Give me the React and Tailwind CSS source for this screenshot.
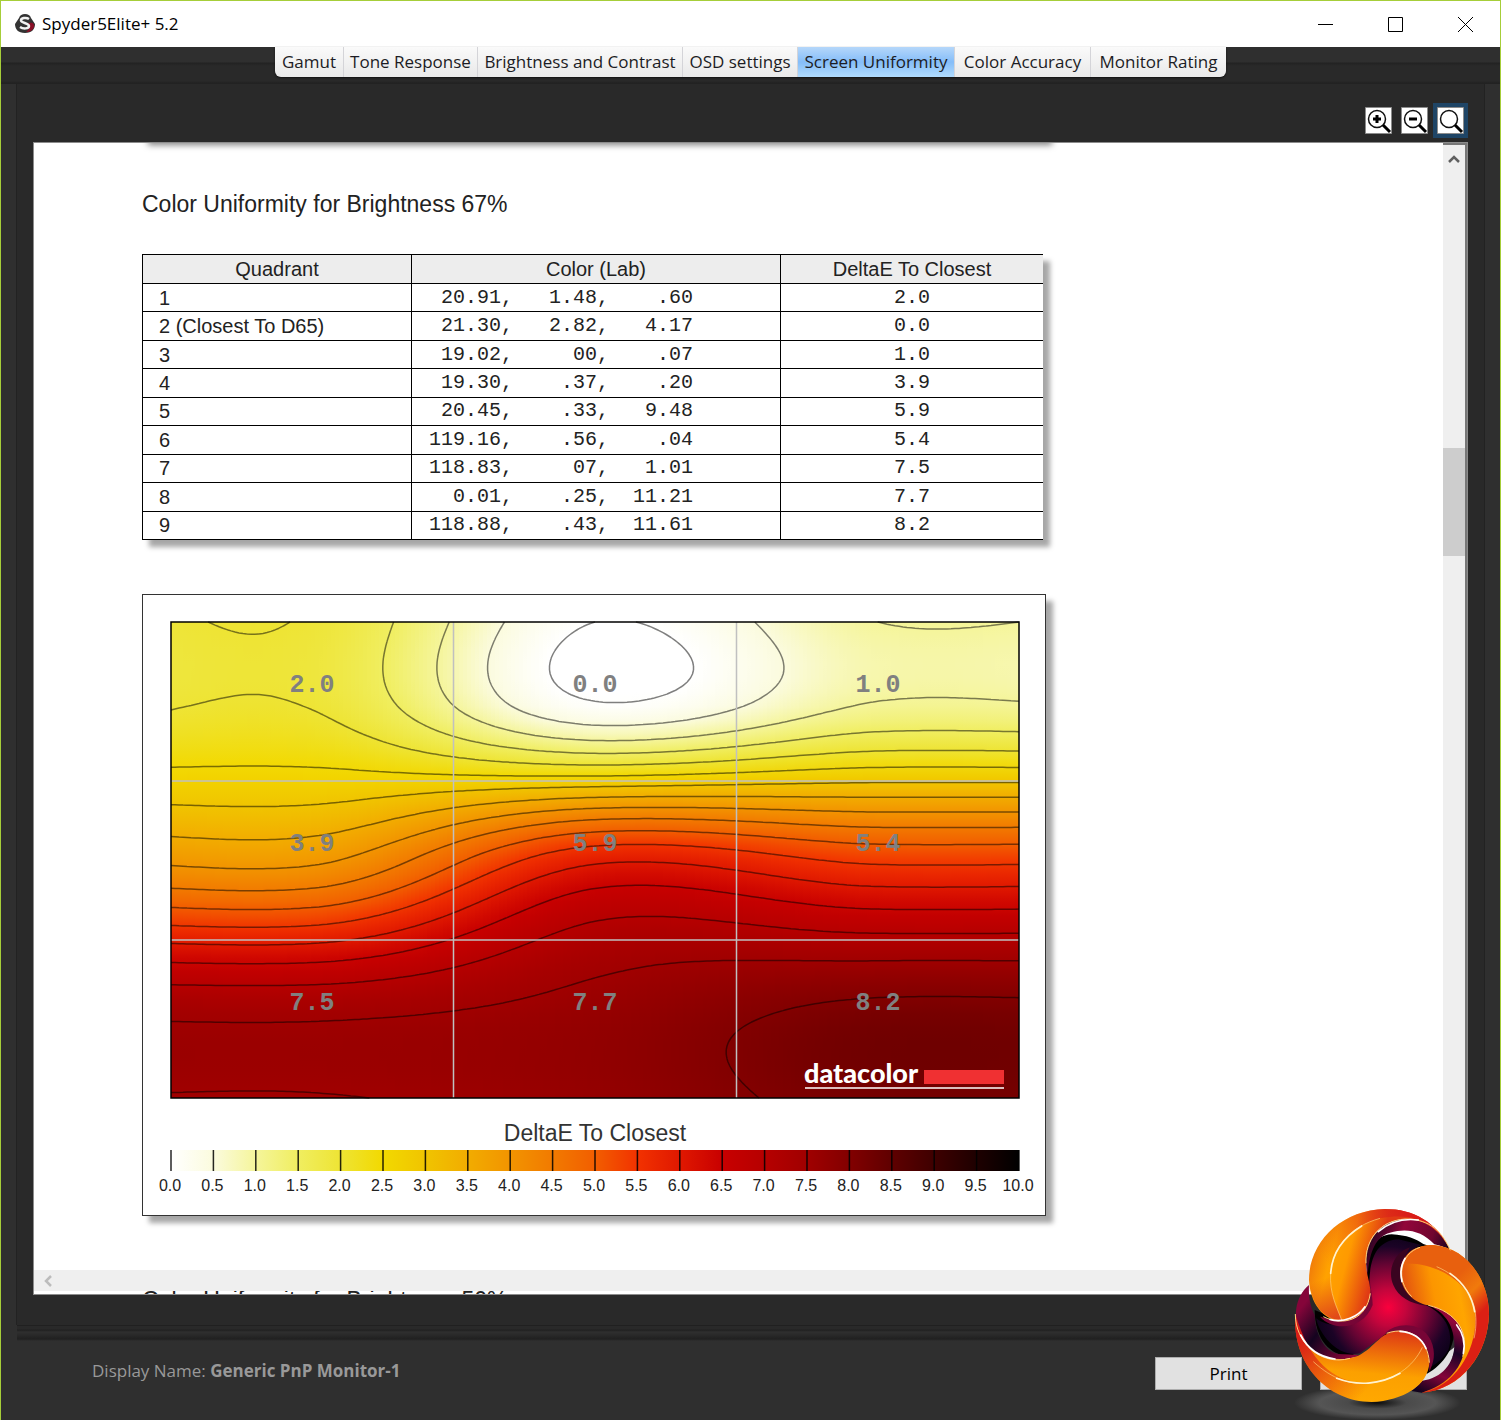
import clsx from "clsx";

const TABS = [
  { label: "Gamut", width: "w-[69px]" },
  { label: "Tone Response", width: "w-[134px]" },
  { label: "Brightness and Contrast", width: "w-[205px]" },
  { label: "OSD settings", width: "w-[115px]" },
  { label: "Screen Uniformity", width: "w-[157px]" },
  { label: "Color Accuracy", width: "w-[136px]" },
  { label: "Monitor Rating", width: "w-[135px]" },
];

const ROWS = [
  { name: "1", lab: ["20.91", "1.48", ".60"], delta: "2.0" },
  { name: "2 (Closest To D65)", lab: ["21.30", "2.82", "4.17"], delta: "0.0" },
  { name: "3", lab: ["19.02", "00", ".07"], delta: "1.0" },
  { name: "4", lab: ["19.30", ".37", ".20"], delta: "3.9" },
  { name: "5", lab: ["20.45", ".33", "9.48"], delta: "5.9" },
  { name: "6", lab: ["119.16", ".56", ".04"], delta: "5.4" },
  { name: "7", lab: ["118.83", "07", "1.01"], delta: "7.5" },
  { name: "8", lab: ["0.01", ".25", "11.21"], delta: "7.7" },
  { name: "9", lab: ["118.88", ".43", "11.61"], delta: "8.2" },
];

// one colour for every 0.5 of deltaE
const SCALE = [
  [255, 255, 255],
  [251, 251, 222],
  [245, 245, 155],
  [240, 238, 96],
  [238, 228, 52],
  [242, 217, 0],
  [240, 196, 0],
  [242, 172, 0],
  [242, 148, 0],
  [242, 122, 0],
  [242, 94, 0],
  [242, 50, 0],
  [224, 24, 0],
  [200, 0, 0],
  [182, 0, 0],
  [160, 0, 0],
  [130, 0, 0],
  [95, 0, 0],
  [62, 0, 0],
  [30, 0, 0],
  [0, 0, 0],
];

const colorFor = (value) => {
  const v = Math.min(Math.max(value, 0), 10) * 2;
  const i = Math.min(Math.floor(v), 19);
  const mix = SCALE[i].map((c, k) =>
    Math.round(c + (SCALE[i + 1][k] - c) * (v - i))
  );
  return `rgb(${mix.join(",")})`;
};

// cubic hermite curve through the three cell centres at t = -1, 0, 1,
// the outer half cells bend back to the edge value
const curve = (a, b, c, t) => {
  const u = Math.min(Math.abs(t), 1.5);
  const end = t < 0 ? a : c;
  const delta = end - b;
  const slope = ((c - a) / 2) * (t < 0 ? -1 : 1);
  if (u > 1) {
    const s = (u - 1) / 0.5;
    return end + (delta / 6) * (s - 1.5 * s * s + 0.5 * s ** 3);
  }
  return (
    b +
    slope * (u ** 3 - 2 * u * u + u) +
    delta * (3 * u * u - 2 * u ** 3) +
    (delta / 3) * (u ** 3 - u * u)
  );
};

const PLOT_W = 848;
const PLOT_H = 476;
const STEP = 4;
const DELTAS = [
  [1.96, 0.0, 1.0],
  [3.9, 5.9, 5.4],
  [7.48, 7.69, 8.17],
];

const field = (x, y) => {
  const tx = (x / PLOT_W) * 3 - 1.5;
  const ty = (y / PLOT_H) * 3 - 1.5;
  const [a, b, c] = DELTAS.map((row) => curve(...row, tx));
  return curve(a, b, c, ty);
};

const contourPath = (level) => {
  let d = "";
  for (let y = 0; y < PLOT_H; y += STEP) {
    for (let x = 0; x < PLOT_W; x += STEP) {
      const corners = [
        [x, y],
        [x + STEP, y],
        [x + STEP, y + STEP],
        [x, y + STEP],
      ];
      const values = corners.map(([cx, cy]) => field(cx, cy) - level);
      const hits = [];
      for (let i = 0; i < 4; i++) {
        const j = (i + 1) % 4;
        if (values[i] < 0 !== values[j] < 0) {
          const k = values[i] / (values[i] - values[j]);
          const px = corners[i][0] + (corners[j][0] - corners[i][0]) * k;
          const py = corners[i][1] + (corners[j][1] - corners[i][1]) * k;
          hits.push(`${px.toFixed(1)} ${py.toFixed(1)}`);
        }
      }
      if (hits.length === 2) d += `M${hits[0]}L${hits[1]}`;
    }
  }
  return d;
};

const CONTOURS = Array.from({ length: 17 }, (_, i) => contourPath(i / 2));
const COLUMNS = Array.from({ length: PLOT_W / STEP }, (_, i) => i * STEP);
const STOPS = Array.from({ length: 35 }, (_, i) => i / 34);

const AppIcon = () => (
  <svg className="size-5" viewBox="0 0 20 20" aria-hidden="true">
    <path d="M10 0c3 0 5 1 6 4l4 6c0 5-3 9-10 9S0 15 0 10l4-6c1-3 3-4 6-4z" fill="#333" />
    <path d="M12 10c5-3 8 0 7 3-1 3-4 5-8 5 3-2 4-5 1-8z" fill="#8a1027" />
    <path d="M14 5c-3-2-8-1-8 1.500S14 9 14 12s-6 3-9 1" fill="none" stroke="#f2f2f2" strokeWidth="2.500" />
  </svg>
);

const TitleBar = () => (
  <header className="flex h-[46px] items-center justify-between bg-white pl-3.5">
    <div className="flex items-center gap-[7px]">
      <AppIcon />
      <h1 className="text-[17px] text-black">Spyder5Elite+ 5.2</h1>
    </div>
    <div className="flex h-full">
      <button type="button" aria-label="Minimize" className="grid w-[70px] place-items-center">
        <svg width="15" height="15" viewBox="0 0 15 15" stroke="#000">
          <path d="M0 7.500H15" />
        </svg>
      </button>
      <button type="button" aria-label="Maximize" className="grid w-[70px] place-items-center">
        <svg width="15" height="15" viewBox="0 0 15 15" stroke="#000" fill="none">
          <path d="M.5.5h14v14H.5z" />
        </svg>
      </button>
      <button type="button" aria-label="Close" className="grid w-[70px] place-items-center">
        <svg width="15" height="15" viewBox="0 0 15 15" stroke="#000">
          <path d="M0 0l15 15M15 0L0 15" />
        </svg>
      </button>
    </div>
  </header>
);

const Tabs = () => (
  <nav className="flex h-[37px] items-start justify-center bg-[linear-gradient(#2f2f2f_15px,#222_16px,#292929_19px,#292929_34px,#222_36px)]">
    <div className="flex h-[30px] overflow-hidden rounded-b-md shadow-[0_1px_2px_#111]">
      {TABS.map(({ label, width }) => (
        <button
          key={label}
          type="button"
          className={clsx(
            "border-r border-[#d4d4d8] text-[17px] leading-[30px] whitespace-nowrap text-[#1c1c24] last:border-r-0",
            width,
            label === "Screen Uniformity"
              ? "bg-linear-to-b from-[#b5d7fa] via-[#85bdf8] to-[#b0dbfd]"
              : "bg-linear-to-b from-[#fafafa] to-[#e9e9e9]"
          )}
        >
          {label}
        </button>
      ))}
    </div>
  </nav>
);

const ZoomButton = ({ label, sign, active }) => (
  <button
    type="button"
    aria-label={label}
    className={clsx("border-4 p-0", active ? "border-[#1f4566]" : "border-transparent")}
  >
    <svg className="block" width="27" height="27" viewBox="0 0 27 27" fill="none">
      <path d="M.5.5h26v26H.5z" fill="#fff" stroke="#8c8c8c" />
      <circle cx="12" cy="12" r="8.500" stroke="#111" strokeWidth="1.500" />
      <path d="M18 18l7 7" stroke="#000" strokeWidth="3" />
      {sign && <path d={sign} stroke="#000" strokeWidth="3" />}
    </svg>
  </button>
);

const UniformityTable = () => (
  <table className="mt-[34px] h-[286px] w-[901px] border-collapse border-y border-l border-black text-[20px] leading-6 text-[#222] shadow-[7px_7px_5px_rgba(0,0,0,0.35)]">
    <thead>
      <tr className="h-[29px] bg-[#ededed]">
        <th className="w-[269px] border border-black p-0 font-normal">Quadrant</th>
        <th className="w-[369px] border border-black p-0 font-normal">Color (Lab)</th>
        <th className="border-b border-black p-0 font-normal">DeltaE To Closest</th>
      </tr>
    </thead>
    <tbody>
      {ROWS.map(({ name, lab, delta }) => (
        <tr key={name}>
          <td className="border border-black py-0 pl-4">{name}</td>
          <td className="border border-black py-0 pl-[17px] font-['Liberation_Mono',monospace] whitespace-pre">
            {`${lab[0]},`.padStart(7) + `${lab[1]},`.padStart(8) + lab[2].padStart(7)}
          </td>
          <td className="border-b border-black p-0 text-center font-['Liberation_Mono',monospace]">
            {delta}
          </td>
        </tr>
      ))}
    </tbody>
  </table>
);

const HeatMap = () => (
  <g transform="translate(28 27)">
    <defs>
      {COLUMNS.map((x) => (
        <linearGradient key={x} id={`col${x}`} x1="0" y1="0" x2="0" y2="1">
          {STOPS.map((s) => (
            <stop key={s} offset={s} stopColor={colorFor(field(x + STEP / 2, s * PLOT_H))} />
          ))}
        </linearGradient>
      ))}
    </defs>
    {COLUMNS.map((x) => (
      <rect key={x} x={x} width={STEP} height={PLOT_H} fill={`url(#col${x})`} shapeRendering="crispEdges" />
    ))}
    {CONTOURS.map((d, i) => (
      <path key={i} d={d} fill="none" stroke="#000" strokeOpacity="0.5" strokeWidth="1.500" />
    ))}
    <path
      d="M282.500 0V476M565.500 0V476M0 159H848M0 318H848"
      stroke="#c0c0c0"
      strokeWidth="1.500"
    />
    <rect width={PLOT_W} height={PLOT_H} fill="none" stroke="#000" strokeWidth="1.500" />
    {DELTAS.map((row, r) =>
      row.map((value, c) => (
        <text
          key={`${r}${c}`}
          x={141 + c * 283}
          y={70 + r * 159}
          textAnchor="middle"
          className="fill-[#808080] font-['Liberation_Mono',monospace] text-[25px] font-bold"
        >
          {value.toFixed(1)}
        </text>
      ))
    )}
    <text x="633" y="461" className="fill-white font-['Lato',sans-serif] text-[27px] font-black">
      datacolor
    </text>
    <path d="M753 448h80v14h-80z" fill="#f03032" />
    <path d="M634 466h199" stroke="#fff" strokeWidth="1.500" />
  </g>
);

const Legend = () => (
  <g transform="translate(28 555)">
    <defs>
      <linearGradient id="scale">
        {SCALE.map((_, i) => (
          <stop key={i} offset={i / 20} stopColor={colorFor(i / 2)} />
        ))}
      </linearGradient>
    </defs>
    <text x="424" y="-9" textAnchor="middle" className="fill-[#333] text-[23px]">
      DeltaE To Closest
    </text>
    <rect width={PLOT_W} height="21" fill="url(#scale)" />
    {SCALE.map((_, i) => (
      <g key={i}>
        <path d={`M${(i * PLOT_W) / 20} 0v21`} stroke="#000" strokeOpacity="0.850" strokeWidth="1.500" />
        <text x={(i * PLOT_W) / 20 - 1} y="41" textAnchor="middle" className="fill-[#222] text-[16px]">
          {(i / 2).toFixed(1)}
        </text>
      </g>
    ))}
  </g>
);

const Chevron = ({ d, color }) => (
  <svg width="12" height="12" viewBox="0 0 12 12" fill="none" stroke={color} strokeWidth="2.500">
    <path d={d} />
  </svg>
);

const Report = () => (
  <main className="border border-[#8c8c8c] bg-white">
    <div className="flex">
      <div className="relative min-w-0 flex-1 overflow-hidden pt-[45px] pr-8 pb-[54px] pl-[108px] font-['Liberation_Sans',sans-serif]">
        <div className="absolute -top-2 left-[114px] h-2 w-[904px] shadow-[0_2px_6px_rgba(0,0,0,0.5)]" />
        <h2 className="text-[23px] leading-8 text-[#222]">Color Uniformity for Brightness 67%</h2>
        <UniformityTable />
        <figure className="mt-[54px] w-[904px] border border-[#333] bg-white shadow-[7px_7px_5px_rgba(0,0,0,0.35)]">
          <svg className="block w-full" viewBox="0 0 902 620" role="img" aria-label="DeltaE To Closest">
            <HeatMap />
            <Legend />
          </svg>
        </figure>
      </div>
      <div className="flex w-6 flex-col items-center border-t-2 border-r-2 border-[#777] bg-[#efefef] pt-2">
        <Chevron d="M1 9l5-5 5 5" color="#606060" />
        <div className="mt-[283px] h-[108px] w-full bg-[#cdcdcd]" />
      </div>
    </div>
    <div className="flex h-[21px] items-center bg-[#efefef] pl-2">
      <Chevron d="M9 1L4 6l5 5" color="#bcbcbc" />
    </div>
    <div className="h-[3px] overflow-hidden pl-[108px] font-['Liberation_Sans',sans-serif] text-[23px] leading-[18px] text-[#222]">
      Color Uniformity for Brightness 50%
    </div>
  </main>
);

const Footer = () => (
  <footer className="flex items-center justify-between pt-[10px] pr-[33px] pb-[30px] pl-[91px]">
    <p className="pb-1.5 text-[17px] text-[#999]">
      Display Name: <b>Generic PnP Monitor-1</b>
    </p>
    <div className="flex gap-[18px]">
      <button type="button" className="h-[33px] w-[147px] border border-[#adadad] bg-[#e1e1e1] text-[17px] text-black">
        Print
      </button>
      <button type="button" aria-label="Next" className="h-[33px] w-[147px] border border-[#adadad] bg-[#e1e1e1]" />
    </div>
  </footer>
);

const ARMS = {
  top: "M541 181C500 95 430 57 345 57C215 60 117 155 117 270C120 340 160 390 212 393C265 392 302 355 301 300C298 265 286 250 288 205C292 135 340 90 405 87C465 87 510 120 541 181Z",
  right: "M390 245C394 195 435 165 490 165C590 172 657 270 657 372C655 490 575 600 455 608C540 585 590 520 583 450C577 395 530 358 475 346C425 335 392 300 390 245Z",
  bottom: "M76 372C66 520 170 635 305 636C400 632 475 585 478 518C474 460 440 424 388 422C330 424 318 470 265 497C200 522 130 500 98 447C85 425 78 405 76 372Z",
};

const Logo = () => (
  <svg
    className="pointer-events-none absolute -right-px bottom-0"
    width="231"
    height="230"
    viewBox="0 0 693 690"
    fill="none"
    aria-hidden="true"
  >
    <defs>
      <radialGradient id="core" gradientUnits="userSpaceOnUse" cx="355" cy="352" r="215">
        <stop offset="0" stopColor="#fa003d" />
        <stop offset="0.250" stopColor="#c3053c" />
        <stop offset="0.600" stopColor="#650433" />
        <stop offset="0.850" stopColor="#1b0326" />
        <stop offset="1" stopColor="#10021c" />
      </radialGradient>
      <linearGradient id="ring" gradientUnits="userSpaceOnUse" x1="300" y1="90" x2="540" y2="180">
        <stop offset="0" stopColor="#14031f" />
        <stop offset="0.400" stopColor="#92063a" />
        <stop offset="0.750" stopColor="#70052f" />
        <stop offset="1" stopColor="#12021c" />
      </linearGradient>
      <linearGradient id="ringLeft" gradientUnits="userSpaceOnUse" x1="80" y1="370" x2="250" y2="500">
        <stop offset="0" stopColor="#85053a" />
        <stop offset="0.400" stopColor="#14031f" />
        <stop offset="1" stopColor="#92063a" />
      </linearGradient>
      <linearGradient id="ringRight" gradientUnits="userSpaceOnUse" x1="560" y1="400" x2="460" y2="610">
        <stop offset="0" stopColor="#92063a" />
        <stop offset="0.350" stopColor="#1b0326" />
        <stop offset="0.700" stopColor="#85053a" />
        <stop offset="1" stopColor="#12021c" />
      </linearGradient>
      <linearGradient id="armTop" gradientUnits="userSpaceOnUse" x1="117" y1="220" x2="305" y2="270">
        <stop offset="0" stopColor="#f07a0a" />
        <stop offset="0.300" stopColor="#ffa200" />
        <stop offset="0.550" stopColor="#ff9a00" />
        <stop offset="1" stopColor="#e03a14" />
      </linearGradient>
      <linearGradient id="armRight" gradientUnits="userSpaceOnUse" x1="400" y1="340" x2="610" y2="300">
        <stop offset="0" stopColor="#e04a12" />
        <stop offset="0.450" stopColor="#fc9600" />
        <stop offset="0.800" stopColor="#ffa500" />
        <stop offset="1" stopColor="#f48a08" />
      </linearGradient>
      <linearGradient id="armBottom" gradientUnits="userSpaceOnUse" x1="330" y1="425" x2="310" y2="636">
        <stop offset="0" stopColor="#df3c14" />
        <stop offset="0.600" stopColor="#fca000" />
        <stop offset="1" stopColor="#ffa800" />
      </linearGradient>
      <linearGradient id="shadeTop" gradientUnits="userSpaceOnUse" x1="420" y1="70" x2="160" y2="200">
        <stop offset="0" stopColor="#d91c18" />
        <stop offset="1" stopColor="#e8501a" stopOpacity="0" />
      </linearGradient>
      <linearGradient id="foldTop" gradientUnits="userSpaceOnUse" x1="150" y1="270" x2="190" y2="390">
        <stop offset="0" stopColor="#e0481a" stopOpacity="0" />
        <stop offset="1" stopColor="#e0481a" />
      </linearGradient>
      <linearGradient id="shadeRight" gradientUnits="userSpaceOnUse" x1="560" y1="260" x2="650" y2="350">
        <stop offset="0" stopColor="#e8600e" />
        <stop offset="0.500" stopColor="#f07a0c" />
        <stop offset="1" stopColor="#dc2014" />
      </linearGradient>
      <linearGradient id="shadeLeft" gradientUnits="userSpaceOnUse" x1="80" y1="430" x2="290" y2="600">
        <stop offset="0" stopColor="#d91c18" />
        <stop offset="1" stopColor="#d91c18" stopOpacity="0" />
      </linearGradient>
      <radialGradient id="floor">
        <stop offset="0" stopColor="#0c0c0c" />
        <stop offset="0.350" stopColor="#4a4a4a" />
        <stop offset="0.700" stopColor="#555" />
        <stop offset="1" stopColor="#555" stopOpacity="0" />
      </radialGradient>
    </defs>
    <ellipse cx="322" cy="638" rx="250" ry="52" fill="url(#floor)" />
    <path d="M355 133C400 112 480 125 495 163L440 165Z" fill="#fff" />
    <path d="M466 570L478 530L555 470C550 520 510 570 466 573Z" fill="#e1e1e1" />
    <path d="M290 270C285 190 310 135 365 133C410 135 440 148 460 162L485 170L400 240L430 330L540 370C570 430 545 510 470 552L440 440L330 440L240 500C180 495 135 450 134 360L215 393L300 330Z" fill="#000" />
    <path d="M298 275C300 205 320 152 385 148L455 165C370 200 370 310 460 342C520 365 555 420 535 480Q515 515 478 533C470 450 410 400 350 430L270 490C210 505 150 440 138 385C190 425 290 405 301 320Z" fill="url(#core)" />
    <path d="M420 172C375 185 350 240 370 285C385 320 420 342 470 347L425 320L392 265L394 215Z" fill="#3a0420" />
    <path d="M541 181C510 110 465 87 405 87C330 92 285 150 288 220L293 255C298 190 315 140 360 128C410 113 455 122 493 163C515 168 530 174 541 181Z" fill="url(#ring)" />
    <path d="M117 285C75 320 65 385 95 442C130 505 205 525 268 495L205 492C160 485 135 425 134 375C121 350 115 320 117 285Z" fill="url(#ringLeft)" />
    <path d="M475 346C545 360 590 405 584 465C585 540 530 605 455 608L425 603L457 572C515 565 555 520 553 460C550 400 520 365 475 346Z" fill="url(#ringRight)" />
    <path d="M150 380C190 425 280 420 308 345C308 325 304 305 300 275L300 330C275 385 225 402 150 380Z" fill="#770536" />
    <path d="M345 430C380 395 455 395 482 450C500 490 490 520 478 545C483 450 430 410 345 430Z" fill="#770536" />
    <path d={ARMS.top} fill="url(#armTop)" />
    <path d="M215 390C200 350 178 310 182 250C190 170 240 110 330 85C440 65 500 100 541 181C500 95 430 57 345 57C215 60 117 155 117 270C120 340 160 390 215 390Z" fill="url(#shadeTop)" />
    <path d="M215 390C200 350 178 310 182 250L118 240C115 340 160 390 215 390Z" fill="url(#foldTop)" />
    <path d={ARMS.right} fill="url(#armRight)" />
    <path d="M400 221C500 215 600 280 615 360C628 470 560 590 455 608C575 600 655 490 657 372C657 270 590 172 490 165C440 165 405 185 400 221Z" fill="url(#shadeRight)" />
    <path d={ARMS.bottom} fill="url(#armBottom)" />
    <path d="M76 372C66 520 170 635 305 636C400 632 470 585 478 518C475 495 465 480 457 470C430 550 350 582 275 579C190 570 120 520 76 372Z" fill="url(#shadeLeft)" />
    <g stroke="#ffd27a" strokeWidth="3">
      <path d="M541 181C510 110 465 87 405 87C330 92 285 150 288 220" />
      <path d="M160 380C220 410 290 390 301 310" />
      <path d="M450 172C390 190 375 270 425 320" />
      <path d="M475 346C560 365 600 430 578 500" />
      <path d="M350 430C420 405 475 450 478 518" />
      <path d="M76 372C75 455 150 530 240 505" />
      <path d="M330 85C240 110 190 170 182 250C178 310 200 350 215 390" strokeWidth="2" />
      <path d="M500 230C570 260 605 310 615 360C620 390 618 420 612 445" strokeWidth="2" />
      <path d="M130 515C190 570 240 582 290 580C370 575 430 530 457 472" strokeWidth="2" />
    </g>
    <g stroke="#fff" strokeWidth="5" strokeLinecap="round">
      <path d="M325 125C360 95 400 84 445 90" />
      <path d="M275 108C215 145 186 190 182 250" stroke="#fff3d0" />
      <path d="M180 388C220 400 265 380 285 350" />
      <path d="M405 205C390 230 390 250 396 275" />
      <path d="M540 250C590 285 608 330 614 365" stroke="#fff3d0" />
      <path d="M560 405C580 430 586 460 580 490" />
      <path d="M390 424C430 427 455 445 468 475" />
      <path d="M200 565C260 588 330 585 390 550" stroke="#fff3d0" />
      <path d="M92 435C115 480 155 502 195 507" />
    </g>
  </svg>
);

const App = () => (
  <div className="relative border-x border-t border-[#a6ce39] bg-[#2f2f2f] font-['Open_Sans','Noto_Sans',sans-serif]">
    <TitleBar />
    <Tabs />
    <section className="mx-[15px] border-x border-[#222] bg-[#292929] px-4 pt-[19px] pb-[30px]">
      <div className="mb-1 flex justify-end gap-px">
        <ZoomButton label="Zoom in" sign="M8 12h8M12 8v8" />
        <ZoomButton label="Zoom out" sign="M8 12h8" />
        <ZoomButton label="Fit" active />
      </div>
      <Report />
    </section>
    <div className="mx-4 h-[22px] border-t border-[#202020] bg-[linear-gradient(#292929_3px,#202020_4px,#2f2f2f_6px,#292929_9px,#202020_13px,#2f2f2f_15px)]" />
    <Footer />
    <Logo />
  </div>
);

export default App;
